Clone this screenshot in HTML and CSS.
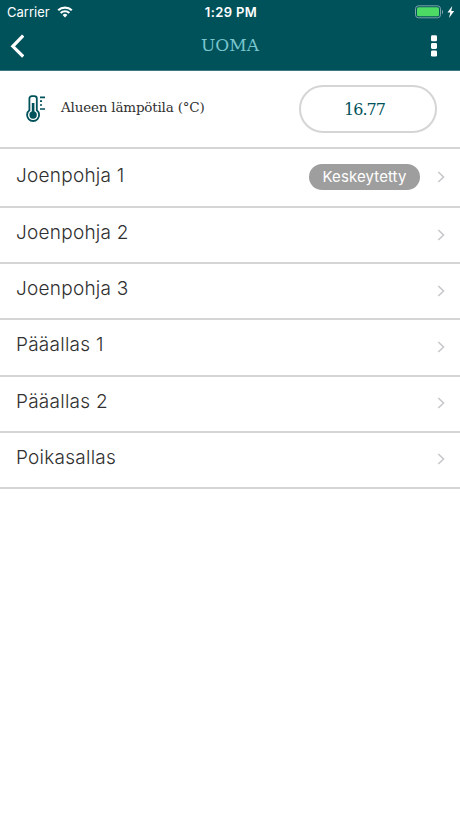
FILE: index.html
```html
<!DOCTYPE html>
<html lang="fi">

<head>
    <meta charset="UTF-8">
    <meta name="viewport" content="width=device-width, initial-scale=1.0">
    <title>Uoma</title>
    <link rel="stylesheet" href="styles.css">
</head>

<body>
    <header class="header">
        <div class="status-bar">
            <div class="carrier">
                <span class="carrier-name">Carrier</span>
                <svg class="wifi" width="16" height="12" viewBox="0 0 16 12">
                    <path d="M1.2 4.3a9.8 9.8 0 0 1 13.6 0M3.7 7a6.2 6.2 0 0 1 8.6 0" fill="none" stroke="#fff" stroke-width="2.2" />
                    <path d="M5.6 8.9a3.5 3.5 0 0 1 4.8 0L8 11.4z" fill="#fff" />
                </svg>
            </div>
            <div class="time">1:29 PM</div>
            <div class="battery">
                <svg width="28" height="14" viewBox="0 0 28 14">
                    <rect x=".5" y=".8" width="25" height="12" rx="3" fill="none" stroke="#7ba3a8" />
                    <rect x="2" y="2.3" width="22" height="9" rx="1.5" fill="#4cd964" />
                    <path d="M27 5v4a2.2 2.2 0 0 0 0-4z" fill="#7ba3a8" />
                </svg>
                <svg width="8" height="12" viewBox="0 0 8 12">
                    <path d="M5.2 0L.5 6.6h2.8L2 12l5.2-7H4.3z" fill="#fff" />
                </svg>
            </div>
        </div>
        <nav class="nav-bar">
            <button class="back-btn" aria-label="Takaisin">
                <svg width="14" height="24" viewBox="0 0 14 24">
                    <path d="M13.2 1.5L2.8 12.3l10.4 10.2" fill="none" stroke="#fff" stroke-width="3.2" />
                </svg>
            </button>
            <h1>UOMA</h1>
            <button class="menu-btn" aria-label="Valikko">
                <svg width="6" height="22" viewBox="0 0 6 22">
                    <rect y=".3" width="6" height="6" rx="1.3" fill="#fff" />
                    <rect y="7.9" width="6" height="6" rx="1.3" fill="#fff" />
                    <rect y="15.5" width="6" height="6" rx="1.3" fill="#fff" />
                </svg>
            </button>
        </nav>
    </header>

    <section class="temperature">
        <svg width="20" height="28" viewBox="0 0 20 28">
            <path d="M3.4 15.3V3.6a2.4 2.4 0 0 1 2.4-2.4h2.6a2.4 2.4 0 0 1 2.4 2.4v11.7a6 6 0 1 1-7.4 0z" fill="none" stroke="#00525a" stroke-width="1.8" />
            <path d="M7.1 8v12" stroke="#00525a" stroke-width="2.6" />
            <circle cx="7.1" cy="20" r="3.7" fill="#00525a" />
            <path d="M14 2.3h5M14 6.1h2M14 10h2M14 14h5" stroke="#00525a" stroke-width="1.7" />
        </svg>
        <span class="temperature-label">Alueen lämpötila (°C)</span>
        <span class="temperature-value">16.77</span>
    </section>

    <ul class="pool-list">
        <li class="pool paused">
            <span class="pool-name">Joenpohja 1</span>
            <span class="badge">Keskeytetty</span>
            <svg class="arrow" width="8" height="12" viewBox="0 0 8 12"><path d="M1.3 1L6.5 6l-5.2 5" /></svg>
        </li>
        <li class="pool">
            <span class="pool-name">Joenpohja 2</span>
            <svg class="arrow" width="8" height="12" viewBox="0 0 8 12"><path d="M1.3 1L6.5 6l-5.2 5" /></svg>
        </li>
        <li class="pool">
            <span class="pool-name">Joenpohja 3</span>
            <svg class="arrow" width="8" height="12" viewBox="0 0 8 12"><path d="M1.3 1L6.5 6l-5.2 5" /></svg>
        </li>
        <li class="pool">
            <span class="pool-name">Pääallas 1</span>
            <svg class="arrow" width="8" height="12" viewBox="0 0 8 12"><path d="M1.3 1L6.5 6l-5.2 5" /></svg>
        </li>
        <li class="pool">
            <span class="pool-name">Pääallas 2</span>
            <svg class="arrow" width="8" height="12" viewBox="0 0 8 12"><path d="M1.3 1L6.5 6l-5.2 5" /></svg>
        </li>
        <li class="pool">
            <span class="pool-name">Poikasallas</span>
            <svg class="arrow" width="8" height="12" viewBox="0 0 8 12"><path d="M1.3 1L6.5 6l-5.2 5" /></svg>
        </li>
    </ul>
</body>

</html>
```
FILE: styles.css
```css
* {
    box-sizing: border-box;
}

body {
    font-family: Inter, "Open Sans", sans-serif;
    margin: 0;
    background-color: white;
    color: #303030;
}

svg {
    display: block;
    flex-shrink: 0;
}

.header {
    height: 71px;
    background-color: #00525a;
    border-bottom: 1px solid #3b7a81;
    color: white;
}

.status-bar {
    display: grid;
    grid-template-columns: 1fr auto 1fr;
    align-items: center;
    height: 24px;
    padding: 0 5px 0 7px;
    font-size: 13px;
}

.carrier {
    display: flex;
    align-items: center;
    gap: 7px;
}

.time {
    font-weight: 600;
    letter-spacing: 0.4px;
}

.battery {
    display: flex;
    align-items: center;
    justify-content: flex-end;
    gap: 4px;
}

.nav-bar {
    display: flex;
    align-items: center;
    justify-content: space-between;
    height: 44px;
    padding: 0 23px 0 10px;
}

.nav-bar h1 {
    margin: 0 0 3px 5px;
    font-family: "DejaVu Serif", serif;
    font-size: 17px;
    font-weight: normal;
    color: #79c5ce;
}

.back-btn,
.menu-btn {
    padding: 0;
    border: none;
    background: none;
}

.temperature {
    display: flex;
    align-items: center;
    height: 78px;
    padding: 0 23px 0 26px;
    border-bottom: 2px solid #d5d5d5;
    font-family: "DejaVu Serif", serif;
}

.temperature-label {
    margin: 0 auto 4px 15px;
    font-size: 13.5px;
    letter-spacing: -0.2px;
}

.temperature-value {
    display: flex;
    align-items: center;
    justify-content: center;
    width: 138px;
    height: 48px;
    padding-right: 7px;
    border: 2px solid #d5d5d5;
    border-radius: 24px;
    font-size: 16px;
    letter-spacing: -1px;
    color: #00525a;
}

.pool-list {
    margin: 0;
    padding: 0;
    list-style: none;
}

.pool {
    display: flex;
    align-items: center;
    height: 56.2px;
    padding: 0 15px 1px 16px;
    border-bottom: 2px solid #d5d5d5;
}

.paused {
    height: 59px;
}

.pool-name {
    margin: 0 auto 4px 0;
    font-size: 19px;
    font-weight: 300;
    letter-spacing: 0.25px;
}

.badge {
    width: 111px;
    height: 26px;
    margin-right: 17px;
    border-radius: 13px;
    background-color: #9e9e9e;
    color: white;
    font-size: 15px;
    letter-spacing: 0.1px;
    line-height: 26px;
    text-align: center;
}

.arrow path {
    fill: none;
    stroke: #c7c7cc;
    stroke-width: 1.6;
}
```
